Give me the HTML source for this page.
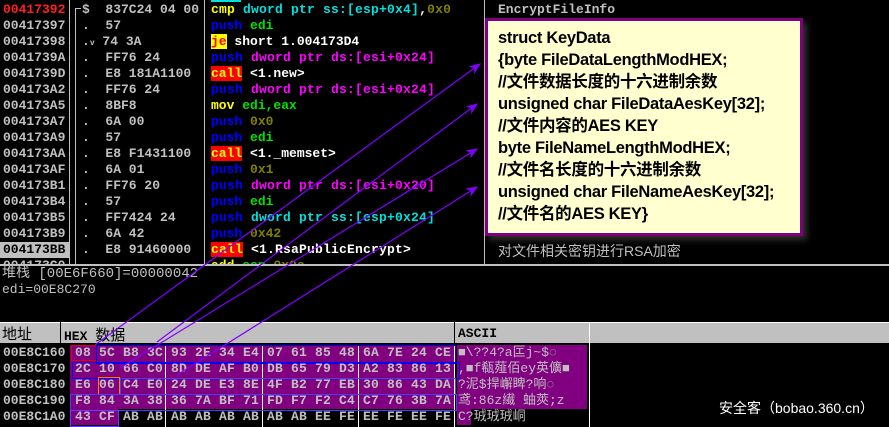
<!DOCTYPE html><html><head><meta charset="utf-8"><style>
body{margin:0;width:889px;height:427px;background:#000;overflow:hidden;position:relative;font-family:"Liberation Mono","WenQuanYi Zen Hei",monospace;font-size:13px;font-weight:bold;color:#c0c0c0}
.a{position:absolute;white-space:pre;line-height:16px;height:16px}
.t{position:absolute;white-space:pre}
.bl{color:#0000ff}.gr{color:#00e000}.cy{color:#00e0e0}.mg{color:#ff00ff}.ol{color:#808000}.ye{color:#ffff00}.wh{color:#fff}
.call{background:#ff0000;color:#ffff00}.je{background:#ffff00;color:#ff0000}
.vl{position:absolute;background:#c0c0c0}
.tip{position:absolute;left:485px;top:18px;width:312px;height:212px;background:#ffffd0;border:3px solid #800080;box-shadow:4px 4px 6px rgba(80,80,80,.6);font-family:"Liberation Sans","Noto Sans CJK SC",sans-serif;font-size:16.5px;color:#000;font-weight:bold}
.tip div{position:absolute;left:10px;white-space:pre;line-height:22px;letter-spacing:-0.3px}
.pb{position:absolute;background:#800080}
.bx{position:absolute;border:1px solid}
</style></head><body>
<div class="vl" style="left:69px;top:0;width:1px;height:264px"></div>
<div class="vl" style="left:204px;top:0;width:1px;height:264px"></div>
<div class="vl" style="left:484px;top:0;width:1px;height:264px"></div>
<div class="vl" style="left:75px;top:8px;width:1px;height:256px"></div>
<div class="vl" style="left:75px;top:8px;width:6px;height:1px"></div>
<div style="position:absolute;left:211px;top:0;width:30px;height:2px;background:#00e0e0"></div>

<div class="a" style="left:3px;top:2px;color:#ff2020">00417392</div>
<div class="a" style="left:3px;top:18px">00417397</div>
<div class="a" style="left:3px;top:34px">00417398</div>
<div class="a" style="left:3px;top:50px">0041739A</div>
<div class="a" style="left:3px;top:66px">0041739D</div>
<div class="a" style="left:3px;top:82px">004173A2</div>
<div class="a" style="left:3px;top:98px">004173A5</div>
<div class="a" style="left:3px;top:114px">004173A7</div>
<div class="a" style="left:3px;top:130px">004173A9</div>
<div class="a" style="left:3px;top:146px">004173AA</div>
<div class="a" style="left:3px;top:162px">004173AF</div>
<div class="a" style="left:3px;top:178px">004173B1</div>
<div class="a" style="left:3px;top:194px">004173B4</div>
<div class="a" style="left:3px;top:210px">004173B5</div>
<div class="a" style="left:3px;top:226px">004173B9</div>
<div class="a" style="left:0;top:242px;width:69px;background:#c0c0c0;color:#000;padding-left:3px;box-sizing:border-box">004173BB</div>
<div class="a" style="left:3px;top:258px;height:6px;overflow:hidden">004173C0</div>

<div class="a" style="left:82px;top:2px">$  837C24 04 00</div>
<div class="a" style="left:82px;top:18px">.  57</div>
<div class="a" style="left:82px;top:34px">.<span style="font-size:8px">v</span> 74 3A</div>
<div class="a" style="left:82px;top:50px">.  FF76 24</div>
<div class="a" style="left:82px;top:66px">.  E8 181A1100</div>
<div class="a" style="left:82px;top:82px">.  FF76 24</div>
<div class="a" style="left:82px;top:98px">.  8BF8</div>
<div class="a" style="left:82px;top:114px">.  6A 00</div>
<div class="a" style="left:82px;top:130px">.  57</div>
<div class="a" style="left:82px;top:146px">.  E8 F1431100</div>
<div class="a" style="left:82px;top:162px">.  6A 01</div>
<div class="a" style="left:82px;top:178px">.  FF76 20</div>
<div class="a" style="left:82px;top:194px">.  57</div>
<div class="a" style="left:82px;top:210px">.  FF7424 24</div>
<div class="a" style="left:82px;top:226px">.  6A 42</div>
<div class="a" style="left:82px;top:242px">.  E8 91460000</div>

<div class="a" style="left:211px;top:2px;letter-spacing:0.2px"><span class="ye">cmp</span> <span class="cy">dword ptr ss:[esp+0x4]</span><span class="wh">,</span><span class="ol">0x0</span></div>
<div class="a" style="left:211px;top:18px"><span class="bl">push</span> <span class="gr">edi</span></div>
<div class="a" style="left:211px;top:34px"><span class="je">je</span><span class="wh"> short 1.004173D4</span></div>
<div class="a" style="left:211px;top:50px;letter-spacing:0.2px"><span class="bl">push</span> <span class="mg">dword ptr ds:[esi+0x24]</span></div>
<div class="a" style="left:211px;top:66px"><span class="call">call</span><span class="wh"> &lt;1.new&gt;</span></div>
<div class="a" style="left:211px;top:82px;letter-spacing:0.2px"><span class="bl">push</span> <span class="mg">dword ptr ds:[esi+0x24]</span></div>
<div class="a" style="left:211px;top:98px"><span class="ye">mov</span> <span class="gr">edi,eax</span></div>
<div class="a" style="left:211px;top:114px"><span class="bl">push</span> <span class="ol">0x0</span></div>
<div class="a" style="left:211px;top:130px"><span class="bl">push</span> <span class="gr">edi</span></div>
<div class="a" style="left:211px;top:146px"><span class="call">call</span><span class="wh"> &lt;1._memset&gt;</span></div>
<div class="a" style="left:211px;top:162px"><span class="bl">push</span> <span class="ol">0x1</span></div>
<div class="a" style="left:211px;top:178px;letter-spacing:0.2px"><span class="bl">push</span> <span class="mg">dword ptr ds:[esi+0x20]</span></div>
<div class="a" style="left:211px;top:194px"><span class="bl">push</span> <span class="gr">edi</span></div>
<div class="a" style="left:211px;top:210px;letter-spacing:0.2px"><span class="bl">push</span> <span class="cy">dword ptr ss:[esp+0x24]</span></div>
<div class="a" style="left:211px;top:226px"><span class="bl">push</span> <span class="ol">0x42</span></div>
<div class="a" style="left:211px;top:242px;letter-spacing:0.2px"><span class="call">call</span><span class="wh"> &lt;1.RsaPublicEncrypt&gt;</span></div>
<div class="a" style="left:211px;top:258px;height:6px;overflow:hidden"><span class="ye">add</span> <span class="gr">esp,</span><span class="ol">0x0c</span></div>

<div class="t" style="left:498px;top:2px;line-height:16px">EncryptFileInfo</div>
<div class="t" style="left:498px;top:241px;font-family:'Liberation Sans','Noto Sans CJK SC',sans-serif;font-weight:normal;font-size:14px">对文件相关密钥进行RSA加密</div>

<div class="tip">
<div style="top:6px">struct KeyData</div>
<div style="top:28px">{byte FileDataLengthModHEX;</div>
<div style="top:50px">//文件数据长度的十六进制余数</div>
<div style="top:72px">unsigned char FileDataAesKey[32];</div>
<div style="top:94px">//文件内容的AES KEY</div>
<div style="top:116px">byte FileNameLengthModHEX;</div>
<div style="top:138px">//文件名长度的十六进制余数</div>
<div style="top:160px">unsigned char FileNameAesKey[32];</div>
<div style="top:182px">//文件名的AES KEY}</div>
</div>

<div class="vl" style="left:0;top:264px;width:889px;height:2px"></div>
<div class="t" style="left:2px;top:266px;font-weight:normal;font-size:14px;line-height:16px">堆栈 [00E6F660]=00000042</div>
<div class="t" style="left:2px;top:282px;font-weight:normal;line-height:16px">edi=00E8C270</div>

<div class="vl" style="left:0;top:322px;width:889px;height:21px;background:#c0c0c0"></div>
<div style="position:absolute;left:0;top:322px;width:889px;height:1px;background:#fff"></div>
<div style="position:absolute;left:60px;top:322px;width:1px;height:21px;background:#000"></div>
<div style="position:absolute;left:454px;top:322px;width:1px;height:21px;background:#000"></div>
<div style="position:absolute;left:589px;top:322px;width:1px;height:105px;background:#fff"></div>
<div class="t" style="left:2px;top:323px;color:#000;font-weight:normal;font-size:15px">地址</div>
<div class="t" style="left:64px;top:324px;color:#000;font-size:13px">HEX <span style="font-weight:normal;font-size:15px">数据</span></div>
<div class="t" style="left:458px;top:326px;color:#000">ASCII</div>

<div class="pb" style="left:70px;top:345px;width:384px;height:64px"></div>
<div class="pb" style="left:70px;top:409px;width:48px;height:16px"></div>
<div class="pb" style="left:457px;top:345px;width:130px;height:64px"></div>
<div class="pb" style="left:457px;top:409px;width:14px;height:16px"></div>
<div class="vl" style="left:165px;top:345px;width:1px;height:82px;background:#fff"></div>
<div class="vl" style="left:262px;top:345px;width:1px;height:82px;background:#fff"></div>
<div class="vl" style="left:358px;top:345px;width:1px;height:82px;background:#fff"></div>
<div class="vl" style="left:454px;top:345px;width:1px;height:82px;background:#fff"></div>
<div class="bx" style="left:71px;top:345px;width:24px;height:14px;border-color:#e00000"></div>
<div class="bx" style="left:96px;top:345px;width:358px;height:17px;border-color:#0000ff"></div>
<div class="bx" style="left:72px;top:362px;width:386px;height:15px;border-color:#0000ff"></div>
<div class="bx" style="left:98px;top:377px;width:20px;height:16px;border-color:#ff8000"></div>
<div class="bx" style="left:120px;top:378px;width:334px;height:15px;border-color:#4040ff"></div>
<div class="bx" style="left:70px;top:394px;width:385px;height:15px;border-color:#4040ff"></div>
<div class="bx" style="left:70px;top:410px;width:47px;height:15px;border-color:#6040ff"></div>

<div class="a" style="left:3px;top:345px">00E8C160</div>
<div class="a" style="left:3px;top:361px">00E8C170</div>
<div class="a" style="left:3px;top:377px">00E8C180</div>
<div class="a" style="left:3px;top:393px">00E8C190</div>
<div class="a" style="left:3px;top:409px">00E8C1A0</div>
<div class="a" style="left:75px;top:345px;letter-spacing:0.2px">08 5C B8 3C 93 2E 34 E4 07 61 85 48 6A 7E 24 CE</div>
<div class="a" style="left:75px;top:361px;letter-spacing:0.2px">2C 10 66 C0 8D DE AF B0 DB 65 79 D3 A2 83 86 13</div>
<div class="a" style="left:75px;top:377px;letter-spacing:0.2px">E6 06 C4 E0 24 DE E3 8E 4F B2 77 EB 30 86 43 DA</div>
<div class="a" style="left:75px;top:393px;letter-spacing:0.2px">F8 84 3A 38 36 7A BF 71 FD F7 F2 C4 C7 76 3B 7A</div>
<div class="a" style="left:75px;top:409px;letter-spacing:0.2px">43 CF AB AB AB AB AB AB AB AB EE FE EE FE EE FE</div>
<div class="a" style="left:458px;top:345px;font-weight:normal">■\??4?a匞j~$◌</div>
<div class="a" style="left:458px;top:361px;font-weight:normal">,■f瓻薤佰ey英儣■</div>
<div class="a" style="left:458px;top:377px;font-weight:normal">?泥$捍嶰睥?响◌</div>
<div class="a" style="left:458px;top:393px;font-weight:normal">鸢:86z繊 蚰莢;z</div>
<div class="a" style="left:458px;top:409px;font-weight:normal">C?珬珬珬峒</div>

<div class="t" style="left:719px;top:398px;font-family:'Liberation Sans','Noto Sans CJK SC',sans-serif;font-weight:normal;font-size:14px;color:#fff">安全客（bobao.360.cn）</div>

<svg style="position:absolute;left:0;top:0" width="889" height="427">
<defs><marker id="m" markerWidth="10" markerHeight="8" refX="9" refY="4" orient="auto"><path d="M0,0 L10,4 L0,8 L3,4Z" fill="#8000ff"/></marker></defs>
<g stroke="#8000ff" stroke-width="1.2" fill="none">
<line x1="95" y1="345" x2="480" y2="64" marker-end="url(#m)"/>
<line x1="157" y1="342" x2="477" y2="104" marker-end="url(#m)"/>
<line x1="120" y1="368" x2="477" y2="149" marker-end="url(#m)"/>
<line x1="177" y1="375" x2="477" y2="187" marker-end="url(#m)"/>
</g></svg>
</body></html>
